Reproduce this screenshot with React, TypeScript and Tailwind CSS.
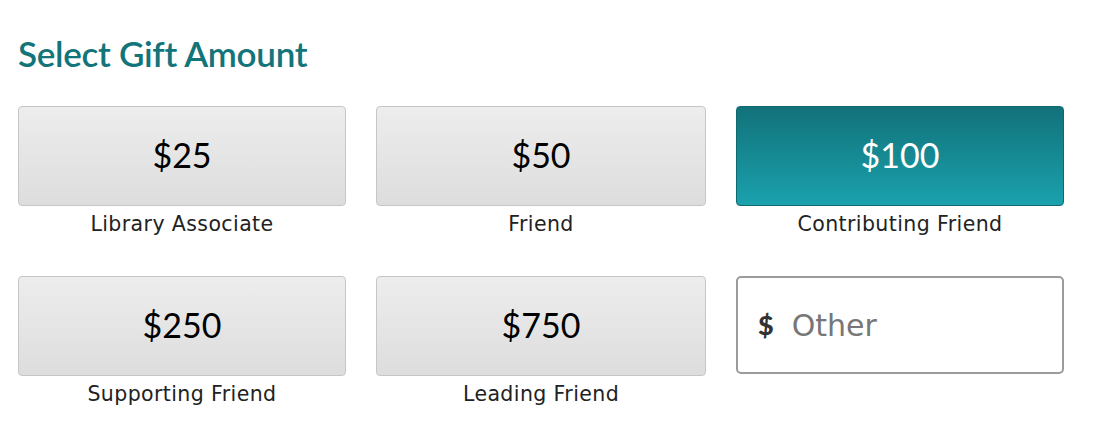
const amounts = [
  { value: "$25", label: "Library Associate" },
  { value: "$50", label: "Friend" },
  { value: "$100", label: "Contributing Friend", selected: true },
  { value: "$250", label: "Supporting Friend" },
  { value: "$750", label: "Leading Friend" },
];

const lato = { fontFamily: "Lato, 'Open Sans', sans-serif" };
const labelFont = { fontFamily: "'DejaVu Sans', Verdana, sans-serif" };

export default function App() {
  return (
    <div className="w-[1108px] h-[442px] bg-white px-[18px] pt-[33px]">
      <h2 style={lato} className="text-[35px] leading-[40px] font-semibold text-[#137479] tracking-[-0.3px]">
        Select Gift Amount
      </h2>
      <div className="mt-[33px] grid grid-cols-[328px_330px_328px] gap-x-[30px] gap-y-[39px] w-fit">
        {amounts.map((a) => (
          <div key={a.value} className="flex flex-col items-center">
            <button
              style={lato}
              className={
                a.selected
                  ? "w-full h-[100px] pb-[4px] rounded-[4px] border border-[#0f6a70] bg-gradient-to-b from-[#12727a] to-[#1aa2ad] text-white text-[34px]"
                  : "w-full h-[100px] pb-[4px] rounded-[4px] border border-[#c6c6c6] bg-gradient-to-b from-[#ededed] to-[#dddddd] text-black text-[34px]"
              }
            >
              {a.value}
            </button>
            <div style={labelFont} className="mt-[5px] text-[20.5px] leading-[26px] text-[#222] tracking-[0.4px]">
              {a.label}
            </div>
          </div>
        ))}
        <div className="flex flex-col">
          <label className="w-full h-[98px] rounded-[5px] border-2 border-[#9b9b9b] bg-white flex items-center px-[20px] gap-[18px]">
            <span style={lato} className="text-[27px] font-black text-[#333]">$</span>
            <input
              style={labelFont}
              placeholder="Other"
              className="outline-none text-[30px] text-[#333] placeholder:text-[#777] w-[220px]"
            />
          </label>
        </div>
      </div>
    </div>
  );
}
